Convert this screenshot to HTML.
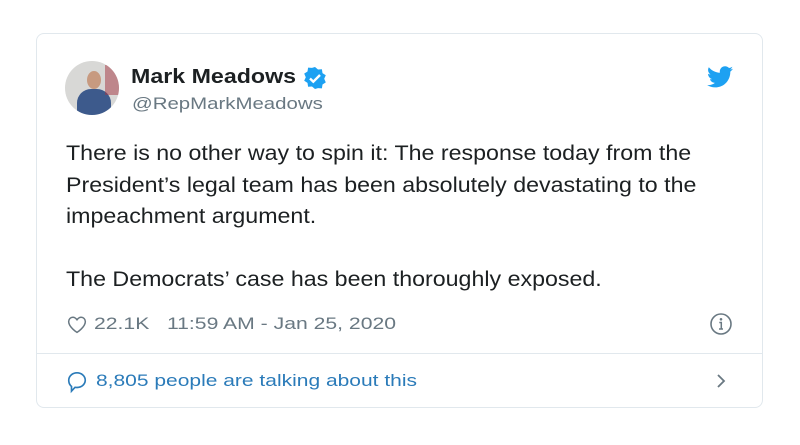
<!DOCTYPE html>
<html><head><style>
body{margin:0;width:800px;height:445px;background:#fff;font-family:"Liberation Sans",sans-serif;position:relative;overflow:hidden}
.card{position:absolute;left:36px;top:33px;width:727px;height:375px;border:1px solid #e1e8ed;border-radius:8px;box-sizing:border-box}
.abs{position:absolute;transform-origin:0 0}
.txt{position:absolute;left:66px;top:138px;font-size:21px;line-height:31.5px;color:#1c2022;width:585px;transform:scaleX(1.105);transform-origin:0 0}
</style></head><body>
<div class="card"></div>
<div class="abs" style="left:65px;top:61px;width:54px;height:54px;border-radius:50%;overflow:hidden;background:#d8d8d6">
 <div class="abs" style="left:12px;top:28px;width:34px;height:30px;border-radius:14px 14px 0 0;background:#3d5a8c"></div>
 <div class="abs" style="left:22px;top:10px;width:14px;height:18px;border-radius:50%;background:#c79a80"></div>
 <div class="abs" style="left:40px;top:4px;width:14px;height:30px;background:#a3343f;opacity:.5"></div>
</div>
<div class="abs" style="left:131px;top:66px;font-size:20px;font-weight:bold;color:#1c2022;transform:scaleX(1.16)">Mark Meadows</div>
<svg class="abs" style="left:303px;top:66px" width="24" height="24" viewBox="0 0 24 24"><path fill="#1da1f2" d="M12 1l3 2.5 3.9-.3.6 3.9 3.3 2.1-1.6 3.6 1.6 3.6-3.3 2.1-.6 3.9-3.9-.3L12 23l-3-2.5-3.9.3-.6-3.9-3.3-2.1L2.8 11.2 1.2 7.6l3.3-2.1.6-3.9 3.9.3z"/><path d="M7 12.5l3.3 3.2L17 9" stroke="#fff" stroke-width="2.4" fill="none"/></svg>
<div class="abs" style="left:132px;top:94px;font-size:17px;color:#697882;transform:scaleX(1.2)">@RepMarkMeadows</div>
<svg class="abs" style="left:707px;top:66px" width="26" height="22" viewBox="0 0 24 20"><path fill="#1da1f2" d="M24 2.4c-.9.4-1.8.7-2.8.8 1-.6 1.8-1.6 2.2-2.7-1 .6-2 1-3.1 1.2C19.4.7 18.1.1 16.7.1c-2.7 0-4.9 2.2-4.9 4.9 0 .4 0 .8.1 1.1C7.8 5.9 4.2 4 1.7 1 1.3 1.7 1 2.6 1 3.5c0 1.7.9 3.2 2.2 4.1-.8 0-1.6-.2-2.2-.6v.1c0 2.4 1.7 4.4 3.9 4.8-.4.1-.8.2-1.3.2-.3 0-.6 0-.9-.1.6 2 2.4 3.4 4.6 3.4-1.7 1.3-3.8 2.1-6.1 2.1-.4 0-.8 0-1.2-.1 2.2 1.4 4.8 2.2 7.5 2.2 9.1 0 14-7.5 14-14v-.6c1-.7 1.8-1.6 2.5-2.6z"/></svg>
<div class="txt">There is no other way to spin it: The response today from the President’s legal team has been absolutely devastating to the impeachment argument.<br><br>The Democrats’ case has been thoroughly exposed.</div>
<svg class="abs" style="left:67px;top:315px" width="20" height="19" viewBox="0 0 24 22"><path d="M12 20.5S2 14 2 7.5C2 4.5 4.3 2.3 7 2.3c2.2 0 3.8 1.4 5 3 1.2-1.6 2.8-3 5-3 2.7 0 5 2.2 5 5.2C22 14 12 20.5 12 20.5z" fill="none" stroke="#697882" stroke-width="1.8"/></svg>
<div class="abs" style="left:94px;top:314px;font-size:17px;color:#697882;transform:scaleX(1.245)">22.1K&nbsp;&nbsp;&nbsp;11:59 AM - Jan 25, 2020</div>
<svg class="abs" style="left:709px;top:312px" width="24" height="24" viewBox="0 0 24 24"><circle cx="12" cy="12" r="10" fill="none" stroke="#697882" stroke-width="1.6"/><circle cx="12" cy="7.3" r="1.3" fill="#697882"/><path d="M10.3 10.5h2v6.5M10 17h4" stroke="#697882" stroke-width="1.5" fill="none"/></svg>
<div class="abs" style="left:37px;top:353px;width:725px;height:1px;background:#e1e8ed"></div>
<svg class="abs" style="left:66px;top:370px" width="22" height="24" viewBox="0 0 24 26"><path d="M12 3c5 0 9 3.5 9 8s-4 8-9 8c-.8 0-1.5-.1-2.2-.2L6 23v-5.2C4.2 16.4 3 13.9 3 11c0-4.5 4-8 9-8z" fill="none" stroke="#2b7bb9" stroke-width="1.8"/></svg>
<div class="abs" style="left:96px;top:371px;font-size:17px;color:#2b7bb9;transform:scaleX(1.235)">8,805 people are talking about this</div>
<svg class="abs" style="left:714px;top:372px" width="14" height="18" viewBox="0 0 14 18"><path d="M4 3l6 6-6 6" fill="none" stroke="#697882" stroke-width="1.8"/></svg>
</body></html>
